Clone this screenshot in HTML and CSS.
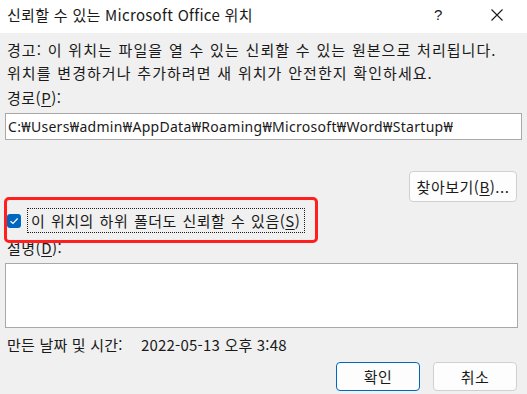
FILE: index.html
```html
<!DOCTYPE html>
<html lang="ko">
<head>
<meta charset="utf-8">
<link rel="stylesheet" href="styles.css">
</head>
<body>
<div class="dialog">
  <div class="titlebar">
    <div class="title">신뢰할 수 있는 Microsoft Office 위치</div>
    <div class="help">?</div>
    <div class="close">
      <svg width="12" height="12" viewBox="0 0 12 12"><path d="M0.5 0.5 L11.5 11.5 M11.5 0.5 L0.5 11.5" stroke="#1a1a1a" stroke-width="1.1" fill="none"/></svg>
    </div>
  </div>
  <div class="content">
    <p class="warning">경고: 이 위치는 파일을 열 수 있는 신뢰할 수 있는 원본으로 처리됩니다.<br>위치를 변경하거나 추가하려면 새 위치가 안전한지 확인하세요.</p>
    <div class="label">경로(<u>P</u>):</div>
    <div class="input">C:₩Users₩admin₩AppData₩Roaming₩Microsoft₩Word₩Startup₩</div>
    <div class="browse-row">
      <div class="btn browse">찾아보기(<u>B</u>)...</div>
    </div>
    <div class="check-row">
      <span class="checkbox">
        <svg width="10" height="8" viewBox="0 0 10 8"><path d="M1.5 4.2 L4 6.5 L8.6 1.5" stroke="#fff" stroke-width="1.2" fill="none"/></svg>
      </span>
      <span class="check-label">이 위치의 하위 폴더도 신뢰할 수 있음(<u>S</u>)</span>
    </div>
    <div class="label desc-label">설명(<u>D</u>):</div>
    <div class="textarea"></div>
    <div class="date-row">
      <span class="date-key">만든 날짜 및 시간:</span>
      <span class="date-val">2022-05-13 오후 3:48</span>
    </div>
    <div class="actions">
      <div class="btn primary">확인</div>
      <div class="btn">취소</div>
    </div>
  </div>
  <div class="highlight"></div>
</div>
</body>
</html>
```

FILE: styles.css
```css
html, body {
  margin: 0;
  padding: 0;
}
body {
  width: 527px;
  height: 394px;
  overflow: hidden;
  background: #f0f0f0;
  font-family: "Noto Sans CJK KR", "Noto Sans", sans-serif;
  color: #1a1a1a;
}
.dialog {
  position: relative;
  width: 527px;
  height: 394px;
  background: #f0f0f0;
}
.titlebar {
  height: 33px;
  background: #ffffff;
  display: flex;
  align-items: center;
}
.title {
  flex: 1;
  padding-left: 7px;
  font-size: 15px;
  line-height: 20px;
  padding-bottom: 3px;
  letter-spacing: 0.3px;
}
.help {
  width: 12px;
  font-size: 15px;
  line-height: 20px;
  font-family: "Liberation Sans", sans-serif;
  padding-bottom: 3px;
  margin-right: 45px;
}
.close {
  width: 12px;
  height: 12px;
  margin-right: 24px;
  margin-bottom: 4px;
  display: flex;
}
.content {
  padding: 0 5px;
  font-size: 15px;
}
.warning {
  margin: 5px 0 0 2px;
  line-height: 23px;
  letter-spacing: 1.05px;
  word-spacing: 0.5px;
}
.label {
  margin: 3px 0 0 2px;
  line-height: 22px;
  letter-spacing: 0.5px;
}
.label u, .btn u, .check-label u {
  text-decoration-thickness: 1px;
  text-underline-offset: 2px;
}
.input {
  margin-top: 4px;
  height: 25px;
  border: 1px solid #a8a8a8;
  background: #fff;
  padding-left: 2px;
  font-family: "Noto Sans", "Noto Sans CJK KR", sans-serif;
  font-size: 14px;
  line-height: 25px;
  letter-spacing: 0.3px;
}
.browse-row {
  display: flex;
  justify-content: flex-end;
  margin-top: 31px;
  padding-right: 5px;
}
.btn {
  width: 82px;
  height: 27px;
  background: #fdfdfd;
  border: 1px solid #d0d0d0;
  border-radius: 4px;
  display: flex;
  align-items: center;
  justify-content: center;
  font-size: 15px;
  letter-spacing: 0.5px;
}
.browse {
  width: 106px;
  height: 28px;
  padding-bottom: 1px;
}
.check-row {
  display: flex;
  align-items: center;
  margin-top: 6px;
  padding-left: 2px;
}
.checkbox {
  width: 14px;
  height: 14px;
  border-radius: 3px;
  background: #0067c0;
  display: flex;
  align-items: center;
  justify-content: center;
  margin-right: 6px;
}
.check-label {
  border: 1px dotted #1a1a1a;
  height: 23px;
  line-height: 23px;
  padding: 0 3px;
  width: 270px;
  letter-spacing: 0.5px;
  word-spacing: 1px;
}
.desc-label {
  margin-top: 4px;
}
.textarea {
  margin-top: 4px;
  width: 511px;
  height: 63px;
  border: 1px solid #a8a8a8;
  background: #fff;
}
.date-row {
  margin: 5px 0 0 2px;
  line-height: 24px;
  display: flex;
  letter-spacing: 0.2px;
}
.date-key {
  width: 134px;
}
.actions {
  display: flex;
  justify-content: flex-end;
  gap: 13px;
  margin-top: 5px;
  padding-right: 5px;
}
.primary {
  border-color: #0067c0;
}
.highlight {
  position: absolute;
  left: 4px;
  top: 197px;
  width: 308px;
  height: 40px;
  border: 3px solid #ff1f1f;
  border-radius: 5px;
}
```
